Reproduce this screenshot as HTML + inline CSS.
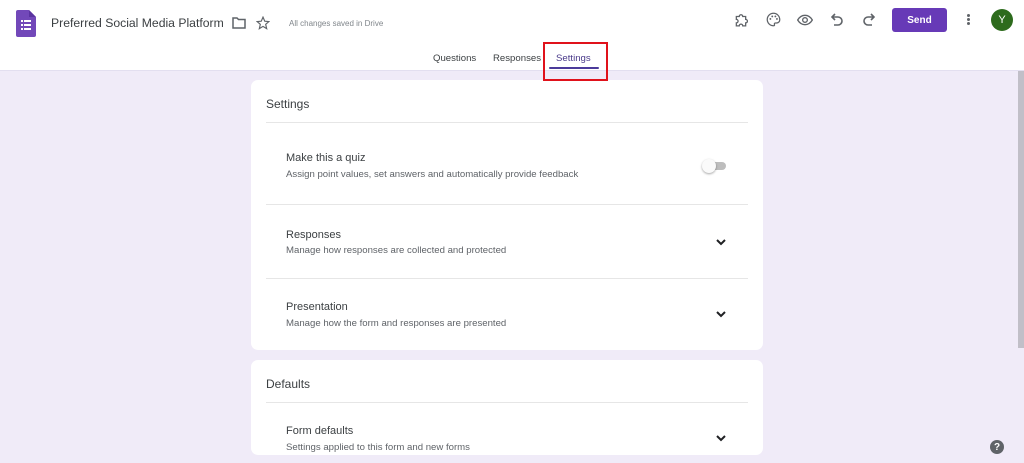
<!DOCTYPE html>
<html><head><meta charset="utf-8"><style>
*{margin:0;padding:0;box-sizing:border-box}
body{width:1024px;height:463px;overflow:hidden;background:#f0ebf8;font-family:"Liberation Sans",sans-serif;position:relative;color:#202124}
.hdr{position:absolute;left:0;top:0;width:1024px;height:71px;background:#fff;border-bottom:1px solid #e3dff0}
.abs{position:absolute}
.card{position:absolute;left:251px;width:512px;background:#fff;border-radius:7px}
.t{font-size:11px;color:#3c4043;position:absolute;left:35px}
.s{font-size:9.6px;color:#5f6368;position:absolute;left:35px}
.line{position:absolute;left:15px;right:15px;height:1px;background:#e6e6e6}
.chev{position:absolute;right:36px;width:12px;height:8px}
</style></head><body>
<div class="hdr">
 <svg class="abs" style="left:16px;top:10px" width="20" height="27" viewBox="0 0 20 27"><path d="M2 0h11l7 7v18a2 2 0 0 1-2 2H2a2 2 0 0 1-2-2V2a2 2 0 0 1 2-2z" fill="#7248b9"/><path d="M13 0l7 7h-7z" fill="#5a33a0"/><g fill="#fff"><rect x="5" y="10" width="2" height="2"/><rect x="8" y="10" width="7" height="2"/><rect x="5" y="14" width="2" height="2"/><rect x="8" y="14" width="7" height="2"/><rect x="5" y="18" width="2" height="2"/><rect x="8" y="18" width="7" height="2"/></g></svg>
 <div class="abs" style="left:51px;top:16px;font-size:12.2px;color:#3c4043">Preferred Social Media Platform</div>
 <svg class="abs" style="left:232px;top:17px" width="14" height="12" viewBox="0 0 14 12"><path d="M1 1h4l1.5 1.5H13v8.5H1z" fill="none" stroke="#5f6368" stroke-width="1.5"/></svg>
 <svg class="abs" style="left:256px;top:16px" width="14" height="14" viewBox="0 0 24 24"><path d="M12 2l3 7 7 .6-5.4 4.7 1.7 7.3L12 17.8 5.7 21.6l1.7-7.3L2 9.6 9 9z" fill="none" stroke="#5f6368" stroke-width="2"/></svg>
 <div class="abs" style="left:289px;top:19px;font-size:8px;color:#80868b">All changes saved in Drive</div>
 <svg class="abs" style="left:734px;top:13px" width="14" height="14" viewBox="0 0 24 24"><path d="M4 6h5a3 3 0 0 1 6 0h5v5a3 3 0 0 1 0 6v5h-5a3 3 0 0 0-6 0H4v-5a3 3 0 0 0 0-6z" fill="none" stroke="#5f6368" stroke-width="2.2"/></svg>
 <svg class="abs" style="left:766px;top:12px" width="15" height="15" viewBox="0 0 24 24"><path d="M12 2a10 10 0 0 0 0 20c1.5 0 2-1 1.5-2s0-2.5 1.5-2.5H17a5 5 0 0 0 5-5C22 6.5 17.5 2 12 2z" fill="none" stroke="#5f6368" stroke-width="2"/><circle cx="7" cy="11" r="1.5" fill="#5f6368"/><circle cx="10" cy="7" r="1.5" fill="#5f6368"/><circle cx="15" cy="7" r="1.5" fill="#5f6368"/><circle cx="17.5" cy="11" r="1.5" fill="#5f6368"/></svg>
 <svg class="abs" style="left:797px;top:14px" width="16" height="12" viewBox="0 0 24 16"><path d="M1 8c3-5 7-7 11-7s8 2 11 7c-3 5-7 7-11 7S4 13 1 8z" fill="none" stroke="#5f6368" stroke-width="2"/><circle cx="12" cy="8" r="3.5" fill="none" stroke="#5f6368" stroke-width="2"/></svg>
 <svg class="abs" style="left:831px;top:13px" width="12" height="13" viewBox="0 0 12 13"><path d="M4 1L1 4l3 3M1 4h6a4 4 0 0 1 0 8H3" fill="none" stroke="#5f6368" stroke-width="1.6"/></svg>
 <svg class="abs" style="left:863px;top:13px" width="12" height="13" viewBox="0 0 12 13"><path d="M8 1l3 3-3 3M11 4H5a4 4 0 0 0 0 8h4" fill="none" stroke="#5f6368" stroke-width="1.6"/></svg>
 <div class="abs" style="left:892px;top:8px;width:55px;height:24px;background:#673ab7;border-radius:3px;color:#fff;font-size:10px;font-weight:bold;display:flex;align-items:center;justify-content:center">Send</div>
 <div class="abs" style="left:967px;top:14px;width:3px;height:3px;border-radius:2px;background:#5f6368;box-shadow:0 4px 0 #5f6368,0 8px 0 #5f6368"></div>
 <div class="abs" style="left:991px;top:9px;width:22px;height:22px;border-radius:50%;background:#2d6b1c;color:#fff;font-size:11px;display:flex;align-items:center;justify-content:center">Y</div>
 <div class="abs" style="left:433px;top:53px;font-size:9.6px;color:#3c4043">Questions</div>
 <div class="abs" style="left:493px;top:53px;font-size:9.6px;color:#3c4043">Responses</div>
 <div class="abs" style="left:556px;top:53px;font-size:9.6px;color:#4a3a8a">Settings</div>
 <div class="abs" style="left:549px;top:67px;width:50px;height:2px;background:#4b3a9a;border-radius:1px"></div>
</div>
<div class="abs" style="left:1018px;top:71px;width:6px;height:277px;background:#c1bfc8"></div>
<div class="card" style="top:80px;height:270px">
 <div class="abs" style="left:15px;top:17px;font-size:12px;color:#3c4043">Settings</div>
 <div class="line" style="top:42px"></div>
 <div class="t" style="top:72px">Make this a quiz</div>
 <div class="s" style="top:89px">Assign point values, set answers and automatically provide feedback</div>
 <div class="abs" style="left:455px;top:82px;width:20px;height:8px;border-radius:4px;background:#bdbdbd"></div>
 <div class="abs" style="left:451px;top:79px;width:14px;height:14px;border-radius:50%;background:#fafafa;box-shadow:0 1px 2px rgba(0,0,0,.35)"></div>
 <div class="line" style="top:124px"></div>
 <div class="t" style="top:149px">Responses</div>
 <div class="s" style="top:165px">Manage how responses are collected and protected</div>
 <svg class="chev" style="top:158px" viewBox="0 0 12 8"><path d="M2 2l4 4 4-4" fill="none" stroke="#202124" stroke-width="2"/></svg>
 <div class="line" style="top:198px"></div>
 <div class="t" style="top:221px">Presentation</div>
 <div class="s" style="top:238px">Manage how the form and responses are presented</div>
 <svg class="chev" style="top:230px" viewBox="0 0 12 8"><path d="M2 2l4 4 4-4" fill="none" stroke="#202124" stroke-width="2"/></svg>
</div>
<div class="card" style="top:360px;height:95px">
 <div class="abs" style="left:15px;top:17px;font-size:12px;color:#3c4043">Defaults</div>
 <div class="line" style="top:42px"></div>
 <div class="t" style="top:65px">Form defaults</div>
 <div class="s" style="top:82px">Settings applied to this form and new forms</div>
 <svg class="chev" style="top:74px" viewBox="0 0 12 8"><path d="M2 2l4 4 4-4" fill="none" stroke="#202124" stroke-width="2"/></svg>
</div>
<div class="abs" style="left:990px;top:440px;width:14px;height:14px;border-radius:50%;background:#5f6368;color:#fff;font-size:10px;font-weight:bold;display:flex;align-items:center;justify-content:center">?</div>
<div class="abs" style="left:543px;top:42px;width:65px;height:39px;border:2px solid #e0121b"></div>
</body></html>
